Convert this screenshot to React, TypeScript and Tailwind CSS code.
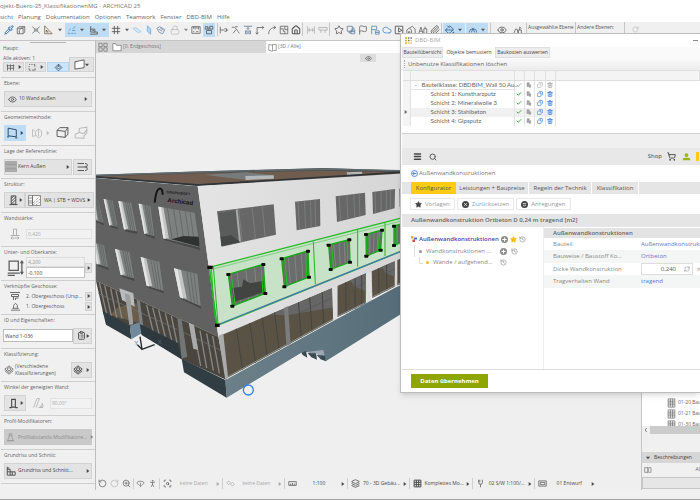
import React from "react";
import {
  Pipette, Lock, Star, Flag, Check, Copy, Trash2, Menu, Search, ShoppingCart,
  RotateCcw, RotateCw, ZoomIn, PersonStanding, History, RefreshCw, Eye, Layers,
  PaintBucket, Paperclip, ScanSearch, ClipboardList, Home, Cloud,
} from "lucide-react";

const ui = "font-['Open_Sans','Noto_Sans',sans-serif]";

type DrawProps = { d: string; className?: string; fill?: string; sw?: number; color?: string };

function Draw({ d, className = "size-[10px]", fill = "none", sw = 1.8, color = "currentColor" }: DrawProps) {
  return (
    <svg viewBox="0 0 24 24" className={`${className} shrink-0`} fill={fill} stroke={color} strokeWidth={sw} aria-hidden="true">
      <path d={d} />
    </svg>
  );
}

function Caret({ down = false, className = "" }: { down?: boolean; className?: string }) {
  return (
    <svg viewBox="0 0 6 6" className={`size-[4px] shrink-0 ${className}`} fill="currentColor" aria-hidden="true">
      <path d={down ? "M0 1h6L3 5z" : "M1 0v6l4-3z"} />
    </svg>
  );
}

/* ---------- Toolbar ---------- */

function Tool({ label, children, on = false }: { label: string; children: React.ReactNode; on?: boolean }) {
  return (
    <button aria-label={label} className={`flex h-[14px] w-3 shrink-0 items-center justify-center ${on ? "bg-[#bfdcf5]" : ""}`}>
      {children}
    </button>
  );
}

function WideTool({ label, children }: { label: string; children: React.ReactNode }) {
  return (
    <button aria-label={label} className="flex h-[14px] w-[22px] shrink-0 items-center justify-between bg-[#bfdcf5] pr-[3px] pl-[2px]">
      {children}
      <Caret down />
    </button>
  );
}

const Sep = () => <span className="h-[13px] w-px shrink-0 bg-[#c6c6c6]" />;

const ic = "size-[10px] shrink-0";

function Toolbar() {
  return (
    <div className="flex h-[18px] shrink-0 items-start overflow-hidden bg-[#f0f0f0] text-[#5a5a5a]">
      <div className="flex h-[15px] shrink-0 items-center pl-[3px]">
        <Tool label="Pipette"><Pipette className={`${ic} text-[#2f6fae]`} strokeWidth={2.4} /></Tool>
        <Tool label="Auswahl"><Draw d="M3 8l4-4h14v13l-4 4H3zM3 8h14v13M17 8l4-4M8 21V12l9-8" /></Tool>
        <span className="w-[3px]" />
        <Tool label="Fang"><Draw d="M3 4l7 6M21 4l-7 6M3 20l7-6M21 20l-7-6M9 10h6v4H9z" sw={1.6} /></Tool>
        <Tool label="Winkel"><Draw d="M4 2v19h18zM8 12v5h5z" color="#6d5c43" /></Tool>
        <span className="flex w-[11px] justify-center"><Caret down /></span>
        <WideTool label="Hilfslinien"><Draw d="M2 20h6M10 20h6M18 20h4M4 14l5-5M12 13h8M14 9l6-6" color="#4f86b8" /></WideTool>
        <WideTool label="Koordinaten"><Draw d="M4 3v14h16v5H2M4 10h10v7M8 13h4" sw={2.2} /></WideTool>
        <span className="w-px" />
        <Tool label="Raster"><Draw d="M8 2v20M16 2v20M2 8h20M2 16h20" sw={2.2} /></Tool>
        <span className="flex w-[9px] justify-center"><Caret down /></span>
        <Tool label="Ebene XY"><Draw d="M2 8l7-2 13 10-7 3z" color="#9cc8ea" fill="#d3e7f7" /></Tool>
        <Tool label="Ebene YZ"><Draw d="M8 2l8 7v13l-8-7z" color="#6fa6d6" fill="#b8d7f2" /></Tool>
        <Tool label="Ebene drehen"><Draw d="M2 8l7-4 12 7-5 10-8-3zM6 10l9 5M10 7l8 5" color="#667f97" /></Tool>
        <span className="w-[2px]" />
        <Tool label="Sperren"><Lock className={`${ic} text-[#b4b4b4]`} strokeWidth={1.6} /></Tool>
        <span className="flex w-[9px] justify-center"><Caret down className="text-[#8a8a8a]" /></span>
        <Tool label="Maßstab"><Draw d="M2 4h20v16H2zM6 4v5M10 4v7M14 4v5M18 4v7M5 16h3M12 16h6" /></Tool>
        <span className="w-px" />
        <Tool label="Gruppierung" on><Draw d="M3 4h6v6H3zM14 3h7v7h-7zM6 13h12v8H6zM9 7h5M10 10l4 3" sw={2} /></Tool>
        <span className="w-[2px]" />
        <Sep />
        <Tool label="Verbinden"><Draw d="M3 4v16M3 12h10M13 9h5v6h-5M18 12h4" /></Tool>
        <Tool label="Trimmen"><Draw d="M2 6c8-3 10 3 18 14M12 11L5 20M10 4h6" /></Tool>
        <Tool label="Anpassen"><Draw d="M2 3h20M12 6v6M9 9l3-3 3 3M6 14h4v7H6zM14 14h4v7h-4z" color="#55708c" /></Tool>
        <Tool label="Ecke"><Draw d="M5 22V6h16M17 2l4 4-4 4M2 18l3 4 3-4" /></Tool>
        <Tool label="Abrunden"><Draw d="M4 22C4 12 10 6 20 6M16 2l5 4-5 4" /></Tool>
        <Tool label="Teilen"><Draw d="M3 3h18v18H3zM3 9h7v6M14 3v8h7M10 15h4v6" /></Tool>
        <Tool label="Haus"><Home className={ic} strokeWidth={2.6} /></Tool>
        <Sep />
        <span className="w-[2px]" />
        <Tool label="Abstand"><Draw d="M4 3v18M20 3v18M4 12h16M8 8v8M16 8v8" color="#aaa" /></Tool>
        <Tool label="Verteilen"><Draw d="M2 6h20v6H2zM7 12v7M17 12v7" color="#aaa" /></Tool>
        <Sep />
        <span className="w-[3px]" />
        <Tool label="Favoriten"><Star className={ic} strokeWidth={2} /></Tool>
        <Tool label="Ebenen"><Draw d="M3 3h12v12H3zM7 15v4h5M15 7h4v4M12 12h9v9h-9zM12 16h9" color="#56779a" /></Tool>
        <Tool label="Fahne"><Flag className={ic} strokeWidth={1.8} /></Tool>
        <Tool label="Fahne mit Liste"><Draw d="M4 22V3h12v8H4M13 14h9v8h-9zM13 18h9" color="#4b7fb5" /></Tool>
        <Tool label="Wolke"><Cloud className={`${ic} text-[#4a90d9]`} strokeWidth={2} /></Tool>
        <Tool label="Rahmen"><Draw d="M3 3h18v18H3zM11 7v10l8-4z" sw={2.2} /></Tool>
        <Tool label="Gebäude"><Draw d="M2 21v-9l6-5 5 5v9M9 7l6-4 7 7v11M6 21v-5h3v5" /></Tool>
        <Tool label="Schrift"><Draw d="M2 20l5-15 5 15M4 15h6M14 9h7v11h-7zM17 4v5" /></Tool>
        <Tool label="Anhang"><Paperclip className={ic} strokeWidth={2} /></Tool>
        <Sep />
        <span className="w-px" />
        <WideTool label="3D-Stil"><PaintBucket className={`${ic} text-[#365f8a]`} strokeWidth={2} /></WideTool>
        <span className="w-px" />
        <WideTool label="Sonnenstand"><Draw d="M3 18a9 9 0 1118 0M8 18l4-10 4 10" color="#365f8a" /></WideTool>
        <span className="w-[2px]" />
        <Sep />
        <span className="w-[5px]" />
        <Tool label="Sichtbarkeit"><Eye className={ic} strokeWidth={2} /></Tool>
        <span className="w-1" />
        <Tool label="Sperre"><Draw d="M2 20l4-10h4l2 10M13 20v-8h7v8M16 12V5l4 3" /></Tool>
        <span className="w-[2px]" />
        <Sep />
        <div className="flex h-[11px] items-center self-start text-[5px] whitespace-nowrap text-[#555]">
          <span className="w-12 pl-px">Ausgewählte Ebene</span>
          <Sep />
          <span className="w-12 pl-px">Andere Ebenen:</span>
          <Sep />
        </div>
        <span className="w-1" />
        <Tool label="Zurück"><RotateCw className="size-[7px] text-[#b6b6b6]" /></Tool>
      </div>
    </div>
  );
}

/* ---------- Info palette ---------- */

function Section({ title, children }: { title: string; children: React.ReactNode }) {
  return (
    <section className="flex min-h-0 flex-1 flex-col border-t border-[#cfcfcf] px-[3px]">
      <h2 className="h-[13px] shrink-0 text-[5px] leading-[10px] whitespace-nowrap text-[#666]">{title}</h2>
      {children}
    </section>
  );
}

const btn = "flex items-center border border-[#d2d2d2] bg-[#e3e3e3] text-[#484848]";

function Palette() {
  return (
    <aside className="flex w-24 shrink-0 flex-col overflow-hidden border-r border-[#bdbdbd] bg-[#f0f0f0] pl-px text-[5px] text-[#5c5c5c]">
      <div className="flex h-[36px] shrink-0 flex-col px-[2px]">
        <span className="mt-px h-px w-9 self-center bg-[#b5b5b5]" />
        <h2 className="leading-[11px]">Haupt:</h2>
        <div className="flex items-end">
          <div className="w-[66px]">
            <p className="leading-[8px] whitespace-nowrap">Alle aktiven: 1</p>
            <div className="flex gap-px">
              <button aria-label="Wand" className={`${btn} h-[10px] w-[21px] justify-around`}><Draw d="M2 7h20M4 4v16M12 4v16M20 4v16M4 14h16" className="size-[9px]" /><Caret /></button>
              <button aria-label="Auswahlart" className={`${btn} h-[10px] w-[21px] justify-around`}><Draw d="M3 4h3M9 4h3M15 4h3M3 8v3M3 14v5h4M10 19h9v-5M18 4v6" className="size-[9px]" /><Caret /></button>
              <button aria-label="Magnet" className="flex h-[10px] w-[22px] items-center justify-center border border-[#b5d5ef] bg-[#cce4f7]"><Draw d="M12 3l9 9-9 9-9-9zM12 8l4 4-4 4-4-4zM12 3v5" className="size-[9px]" sw={2.4} color="#44617c" /></button>
            </div>
          </div>
          <button aria-label="Wandtyp" className={`${btn} h-[15px] flex-1 justify-between px-1`}><Draw d="M2 6l20-4v17L2 22z" fill="#fff" className="size-[11px]" /><Caret down /></button>
        </div>
      </div>

      <Section title="Ebene:">
        <button className={`${btn} h-[16px] gap-[2px] px-[3px]`}>
          <Eye className="size-[9px]" /><span className="flex-1 text-left">10 Wand außen</span><Caret />
        </button>
      </Section>

      <Section title="Geometriemethode:">
        <div className="flex h-[16px] items-center justify-between pr-1">
          <button aria-label="Gerade Wand" className="flex h-[16px] w-[22px] items-center justify-between bg-[#bfdcf5] px-[2px] text-[#2a4a6a]"><Draw d="M4 4l15 3v13L4 18zM2 20h4M17 22h4" className="size-[13px]" /><Caret /></button>
          <button aria-label="Bogenwand" className="flex items-center gap-[3px] text-[#bbb]"><Draw d="M3 5l6 4 6-5 6 4v10l-6 4-4-5-8 2zM9 9v9M15 4v14" className="size-[12px]" /><Caret /></button>
          <button aria-label="Rechteckwand"><Draw d="M2 8l5-5h15v12l-5 6L2 19zM2 8l15 2 5-7M17 10v11" className="size-[13px]" /></button>
          <button aria-label="Gedrehte Wand" className="text-[#bbb]"><Draw d="M2 14l7-3V4l13-2v10l-5 5v4L2 20zM9 11l8 2 5-7" className="size-[14px]" /></button>
        </div>
      </Section>

      <Section title="Lage der Referenzlinie:">
        <div className="flex gap-px">
          <button className={`${btn} h-[16px] w-[68px] gap-px pr-px`}>
            <svg viewBox="0 0 12 10" className="h-[11px] w-[12px]"><path d="M0 .5h12M0 9.5h12M0 2.5h12M0 7.5h12" stroke="#555" strokeWidth=".8" /><path d="M0 3l2 4 2-4 2 4 2-4 2 4 2-4M0 7l2-4 2 4 2-4 2 4 2-4 2 4" stroke="#777" strokeWidth=".5" fill="none" /></svg>
            <span className="flex-1 text-left whitespace-nowrap">Kern Außen</span><Caret />
          </button>
          <button aria-label="Referenzlinie spiegeln" className={`${btn} h-[16px] flex-1 justify-center`}><Draw d="M1 5h13M1 12h20M1 19h13M16 5c6 0 6 6 1 6M16 19c6 0 6-6 1-6" className="size-[12px]" /></button>
        </div>
      </Section>

      <Section title="Struktur:">
        <div className="flex">
          <button aria-label="Struktur" className={`${btn} h-[16px] w-[22px] justify-between pr-px pl-[3px]`}><Draw d="M7 2h10v18H7zM3 21h18M7 8l6-6M7 14L17 4M7 20L17 10" className="size-[11px]" sw={2} /><Caret /></button>
          <button className={`${btn} h-[16px] flex-1 gap-[2px] px-[2px] whitespace-nowrap`}>
            <svg viewBox="0 0 14 11" className="h-[11px] w-[14px] shrink-0" fill="#f8f8f8" stroke="#666" strokeWidth=".7"><path d="M.5.5h4v10h-4zM4.500.5h8v10h-8zM.5 3h4M.5 6h4M.5 8h4" /><path d="M5 8l7-7M5 10l7-6M8 10l4-3" strokeDasharray="1 1" /></svg>
            <span className="flex-1 text-left">WA | STB + WDVS</span><Caret />
          </button>
        </div>
      </Section>

      <Section title="Wandstärke:">
        <label className="flex h-[16px] items-center text-[#aaa]">
          <span className="flex w-[22px] justify-center"><Draw d="M9 2h6v13H9zM3 15h18M4 20h16M7 17l-3 3 3 3M17 17l3 3-3 3" className="size-[12px]" /></span>
          <input aria-label="Wandstärke" defaultValue="0,420" className="h-[10px] min-w-0 flex-1 border border-[#e0e0e0] bg-[#f2f2f2] px-px text-[#aaa]" />
        </label>
      </Section>

      <Section title="Unter- und Oberkante:">
        <div className="-mt-[3px] flex items-center">
          <span className="flex w-[22px] justify-center"><Draw d="M3 3h13v13H3zM1 20h17M1 23h10M21 3v18M19 6l2-3 2 3M19 18l2 3 2-3" className="size-[17px]" /></span>
          <div className="w-[59px]">
            <input aria-label="Oberkante" defaultValue="4,200" className="block h-[10px] w-full border border-[#dcdcdc] bg-[#f0f0f0] px-px text-[#999]" />
            <input aria-label="Unterkante" defaultValue="-0,100" className="block h-[11px] w-full border border-[#c4c4c4] bg-white px-px text-[#444]" />
          </div>
          <button aria-label="Kanten" className={`${btn} ml-auto h-[10px] w-[7px] justify-center`}><Caret /></button>
        </div>
      </Section>

      <Section title="Verknüpfte Geschosse:">
        <div className="-mt-[3px] flex flex-col whitespace-nowrap">
          <div className="flex h-[11px] items-center">
            <span className="flex w-[22px] justify-center"><Draw d="M2 5h20M5 9h14v4H5zM9 13v7M13 20v-4h6" className="size-[12px]" /></span>
            <span className="leading-[9px]">2. Obergeschoss (Ursp...</span>
            <button aria-label="Oberes Geschoss" className={`${btn} ml-auto h-[9px] w-[7px] justify-center`}><Caret /></button>
          </div>
          <div className="flex h-[10px] items-center">
            <span className="flex w-[22px] justify-center"><Draw d="M2 20h20M5 16h14M8 16V9l4-4 4 4v7" className="size-[11px]" /></span>
            <span className="leading-[9px]">1. Obergeschoss</span>
            <button aria-label="Unteres Geschoss" className={`${btn} ml-auto h-[9px] w-[7px] justify-center`}><Caret /></button>
          </div>
        </div>
      </Section>

      <Section title="ID und Eigenschaften:">
        <div className="flex items-center justify-between">
          <input aria-label="ID" defaultValue="Wand 1-036" className="-ml-px h-[13px] w-[70px] border border-[#bcbcbc] bg-white px-px text-[#444]" />
          <button aria-label="Eigenschaften" className={`${btn} h-[16px] w-[21px] justify-between pr-px pl-[3px]`}><ClipboardList className="size-[9px]" strokeWidth={2.4} /><Caret /></button>
        </div>
      </Section>

      <Section title="Klassifizierung:">
        <div className="flex items-center">
          <Draw d="M12 2l10 8-10 8-10-8zM2 14l10 8 10-8M12 6l5 4-5 4-5-4z" className="size-[10px]" />
          <p className="ml-px flex-1 leading-[7px]">(Verschiedene<br />Klassifizierungen)</p>
          <button aria-label="Klassifizierung wählen" className={`${btn} h-[16px] w-[21px] justify-between pr-px pl-px`}><Draw d="M12 2l10 8-10 8-10-8zM2 14l10 8 10-8M12 6l5 4-5 4-5-4z" className="size-[10px]" sw={2.2} /><Caret /></button>
        </div>
      </Section>

      <Section title="Winkel der geneigten Wand:">
        <div className="flex items-center gap-[6px]">
          <button aria-label="Wandneigung" className={`${btn} h-[16px] w-[22px] justify-between pr-px pl-[3px]`}><Draw d="M8 3h8v17H8zM3 21h5M16 21h5" className="size-[11px]" sw={2.4} /><Caret /></button>
          <Draw d="M3 21L10 3h5L8 21M13 21h9M16 17a3 3 0 103-3M21 12l-2 8" className="size-[12px]" color="#b5b5b5" />
          <input aria-label="Neigungswinkel" defaultValue="90,00°" className="h-[11px] w-0 flex-1 border border-[#e2e2e2] bg-[#f2f2f2] px-px text-[#aaa]" />
        </div>
      </Section>

      <Section title="Profil-Modifikatoren:">
        <button className="flex h-[16px] items-center gap-[3px] bg-[#c9c9c9] px-[2px] whitespace-nowrap text-[#8f8f8f]">
          <Draw d="M9 2h6l1 10 4 8H4l4-8zM2 21h20M9 7h6" className="size-[9px]" />
          <span className="flex-1 text-left">Profilabstands-Modifikatore...</span><Caret />
        </button>
      </Section>

      <Section title="Grundriss und Schnitt:">
        <button className={`${btn} h-[16px] gap-[2px] px-px`}>
          <Draw d="M3 2v20h19M3 8h7v14M10 14h12v8M3 5h5M3 14h7M15 14v8" className="size-[10px]" sw={2.2} />
          <span className="flex-1 text-left whitespace-nowrap">Grundriss und Schnitt...</span><Caret />
        </button>
      </Section>
      <div className="h-[7px] shrink-0 border-t border-[#cfcfcf]" />
    </aside>
  );
}

/* ---------- 3D view ---------- */

type Quad = [number, number, number, number, number, number, number, number];
const pts = (q: number[]) => q.join(" ");
const mix = (a: number, b: number, t: number) => a + (b - a) * t;

function Panes({ q, cuts, fill, line, w = 2 }: { q: Quad; cuts: number[]; fill: string; line: string; w?: number }) {
  const [x1, y1, x2, y2, x3, y3, x4, y4] = q;
  return (
    <g>
      <polygon points={pts(q)} fill={fill} />
      {cuts.map((t) => (
        <line key={t} x1={mix(x1, x2, t)} y1={mix(y1, y2, t)} x2={mix(x4, x3, t)} y2={mix(y4, y3, t)} stroke={line} strokeWidth={w} />
      ))}
    </g>
  );
}

const leftWindows: Quad[] = [
  [8, 112, 24, 117, 40, 188, 14, 180],
  [41, 117, 68, 122, 82, 200, 58, 196],
  [85, 123, 124, 129, 140, 214, 102, 208],
  [146, 131, 181, 137, 193, 228, 163, 221],
  [205, 140, 314, 158, 329, 262, 220, 235],
  [10, 248, 42, 256, 54, 322, 20, 312],
  [75, 267, 118, 276, 132, 355, 92, 344],
  [152, 291, 208, 305, 220, 392, 170, 377],
  [252, 325, 322, 341, 332, 438, 270, 412],
];

const topWindows: Quad[] = [
  [381, 154, 551, 133, 558, 224, 395, 260],
  [615, 125, 690, 117, 691, 198, 620, 211],
  [737, 109, 825, 98, 827, 165, 741, 186],
  [847, 96, 915, 87, 914, 145, 849, 162],
  [928, 86, 990, 78, 990, 130, 929, 141],
];

const selectedWindows: Quad[] = [
  [415, 343, 520, 313, 526, 400, 427, 438],
  [575, 296, 654, 273, 657, 351, 583, 380],
  [716, 255, 778, 239, 780, 306, 722, 328],
  [828, 223, 876, 210, 872, 270, 829, 288],
  [912, 198, 950, 188, 950, 240, 912, 256],
];

const glazing: { q: Quad; cuts: number[] }[] = [
  { q: [388, 528, 727, 384, 730, 480, 410, 655], cuts: [0.15, 0.27, 0.38, 0.49, 0.7, 0.8, 0.91] },
  { q: [742, 378, 828, 340, 828, 430, 742, 472], cuts: [0.3, 0.62, 0.85] },
  { q: [845, 334, 914, 304, 914, 380, 847, 414], cuts: [0.3, 0.65] },
  { q: [922, 300, 1000, 268, 1000, 350, 922, 376], cuts: [0.5] },
];

function Building() {
  return (
    <svg viewBox="18 -321 1635 1272" className="block h-[424px] w-[545px] shrink-0" role="img" aria-label="3D-Ansicht des Gebäudes">
      <defs>
        <linearGradient id="wall" x1="0" x2="1"><stop offset="0" stopColor="#e4e4e4" /><stop offset="1" stopColor="#d4d4d4" /></linearGradient>
        <linearGradient id="base" gradientUnits="userSpaceOnUse" x1="410" y1="0" x2="930" y2="0"><stop offset="0" stopColor="#6c8089" /><stop offset="1" stopColor="#566d79" /></linearGradient>
      </defs>

      {/* roof */}
      <polygon points="18,44 340,34 700,24 1000,34 1000,44 323,78 18,52" fill="#4d5254" />
      <polygon points="30,49 345,40 690,32 1000,38 325,72" fill="#705d4f" />
      <polygon points="345,44 470,37 550,46 550,56 470,59 400,52" fill="#777b7c" />
      <polygon points="466,48 551,46 552,56 467,60" fill="#b4b8b9" />
      <polygon points="770,37 815,35 818,42 772,45" fill="#b4b8b9" />
      <path d="M18 46L340 36 700 27 930 32" stroke="#60696c" strokeWidth="4" fill="none" />
      <path d="M18 51L323 75 930 37" stroke="#2f3335" strokeWidth="5" fill="none" />

      {/* shaded facade */}
      <polygon points="18,54 323,79 385,530 265,475 18,362" fill="#616161" />
      {leftWindows.map((q) => {
        const [x1, y1, x2, y2, x3, y3, x4, y4] = q;
        const big = x2 - x1 > 90;
        const a = big ? 0.14 : 0.3;
        return (
          <g key={pts(q)}>
            <polygon points={pts([x4, y4, x3, y3, x3 + 2, y3 + 8, x4 + 4, y4 + 6])} fill="#484848" />
            <Panes q={q} cuts={big ? [0.25, 0.42, 0.58, 0.74, 0.87] : [0.55, 0.7, 0.85]} fill="#7d8281" line="#5a5f5e" />
            <polygon points={pts([x1, y1, mix(x1, x2, a), mix(y1, y2, a), mix(x4, x3, a * 1.1), mix(y4, y3, a * 1.1) - 4, x4, y4])} fill="#c3c6c5" />
            <polygon points={pts([x1, y1, mix(x1, x2, a / 2), mix(y1, y2, a / 2), mix(x4, x3, a / 2), mix(y4, y3, a / 2), x4, y4])} fill="#e4e6e5" />
          </g>
        );
      })}
      <polygon points="280,228 326,230 329,260 244,238" fill="#2f3231" />
      <path d="M194 128Q198 88 208 86T218 104" stroke="#151515" strokeWidth="6" fill="none" />
      <g fill="#222" fontFamily="'Liberation Sans', Arial, sans-serif" fontWeight="bold">
        <text x="229" y="100" fontSize="11" transform="rotate(5 229 100)">GRAPHISOFT</text>
        <text x="232" y="126" fontSize="18" fill="#111" transform="rotate(7 232 126)">Archicad</text>
      </g>

      {/* ground floor, left */}
      <polygon points="18,362 265,475 385,530 410,660 275,598 150,520 40,462" fill="#4a463f" />
      <polygon points="85,440 140,430 150,490 60,465" fill="#6a5d49" />
      <polygon points="88,385 130,400 134,440 96,420" fill="#b9bcbc" />
      <g stroke="#858887" strokeWidth="4">
        <path d="M28 368l22 94M44 376l20 92M62 385l18 88M78 392l18 84M170 435l22 90M188 443l22 90M206 450l22 90M226 460l20 85M244 468l18 85M310 500l22 118M330 512l20 112M350 520l20 112M368 528l20 112" fill="none" />
        <path d="M24 400L262 508M270 512L400 575" strokeWidth="2" stroke="#6e7473" />
      </g>
      <polygon points="104,400 120,405 130,493 118,495" fill="#9c9f9e" />
      <polygon points="140,420 150,424 160,500 150,497" fill="#7d8080" />
      <polygon points="262,475 275,480 292,590 275,596" fill="#727575" />
      <polygon points="296,488 312,495 324,570 310,566" fill="#a9acab" />

      {/* lit facade */}
      <polygon points="323,78 1000,37 1000,350 923,378 385,530" fill="url(#wall)" />
      {topWindows.map((q) => (
        <Panes key={pts(q)} q={q} cuts={[0.12, 0.38, 0.62, 0.8]} fill="#666766" line="#858887" />
      ))}
      <polygon points="385,160 440,150 448,248 394,258" fill="#5a5c5b" />
      <path d="M440 148l10 97" stroke="#a8aaa9" strokeWidth="6" />
      <polygon points="392,230 425,226 450,246 395,258" fill="#444746" />

      {/* ground floor, right */}
      {glazing.map(({ q, cuts }) => {
        const [x1, y1, x2, y2, x3, y3, x4, y4] = q;
        return (
          <g key={pts(q)}>
            <polygon points={pts(q)} fill="#5a5345" />
            <polygon points={pts([mix(x1, x2, 0.45), mix(y1, y2, 0.45), x2, y2, x3, mix(y2, y3, 0.6), mix(x1, x2, 0.6), mix(y1, y2, 0.6) + 24])} fill="#656665" />
            <Panes q={q} cuts={cuts} fill="none" line="#454441" w={3} />
            <path d={`M${x1} ${mix(y1, y4, 0.35)}L${x2} ${mix(y2, y3, 0.3)}`} stroke="#555" strokeWidth="2" />
            <path d={`M${x4} ${y4 - 3}L${x3} ${y3 - 3}`} stroke="#8a8d8c" strokeWidth="3" />
          </g>
        );
      })}
      <polygon points="582,444 594,439 602,552 589,557" fill="#7b7c7b" />
      <path d="M826 342v88" stroke="#94681c" strokeWidth="3" />
      <polygon points="385,528 400,521 414,652 406,660" fill="#a9acab" />
      <polygon points="726,384 742,378 742,478 730,484" fill="#dedede" />
      <polygon points="828,341 844,335 845,424 830,430" fill="#dedede" />

      {/* plinth */}
      <polygon points="406,660 730,483 915,383 1000,345 1000,420 707,604 700,570 634,578 410,713" fill="url(#base)" />
      <path d="M634 578l14-5 4 20-14-8zM652 578h24l2 8-14 6zM664 592l14-12 3 19zM680 585h20l2 6-10 7zM690 597l14-12 4 19z" fill="#3a4a52" />
      <polygon points="652,572 700,560 704,585 690,590 678,580 664,583" fill="#64798a" fillOpacity="0.6" />
      <polygon points="38,453 120,497 124,538 48,494" fill="#2f3c42" />
      <polygon points="120,497 148,487 155,520 124,538" fill="#71899a" />
      <polygon points="150,492 265,550 275,598 155,525" fill="#2d393f" />
      <polygon points="275,596 406,660 410,713 282,637" fill="#303d43" />

      {/* selected wall */}
      <polygon points="358,322 1000,157 1000,247 381,497" fill="#c8e2c7" stroke="#27ba27" strokeWidth="4" />
      <path d="M370 320l14 172M364 322l10 150M358 322l23 175M670 244l6 129M803 208v112M885 187v101" stroke="#22b722" strokeWidth="3" fill="none" />
      <path d="M358 330L1000 166" stroke="#58c658" strokeWidth="2" />
      <path d="M381 495L1000 247" stroke="#4678a8" strokeWidth="4" />
      {selectedWindows.map((q) => (
        <g key={pts(q)}>
          <Panes q={q} cuts={[0.25, 0.5, 0.75]} fill="#6a6d6b" line="#8d918f" />
        </g>
      ))}
      <polygon points="426,384 456,380 460,358 480,370 520,362 522,396 432,426" fill="#424442" />
      {selectedWindows.map((q) => (
        <g key={pts(q)}>
          <polygon points={pts(q)} fill="none" stroke="#14a814" strokeWidth="4" />
          <path d={`M${q[0] + 9} ${q[1]}L${q[6] + 9} ${q[7]}M${q[2] - 7} ${q[3] + 4}L${q[4] - 7} ${q[5]}`} stroke="#1fc41f" strokeWidth="3" />
          {[0, 2, 4, 6].map((i) => (
            <rect key={i} x={q[i] - 6} y={q[i + 1] - 4} width="12" height="9" rx="2" fill="#0b0b0b" />
          ))}
        </g>
      ))}
      <rect x="352" y="317" width="16" height="10" fill="#0b0b0b" />
      <rect x="375" y="491" width="14" height="10" fill="#0b0b0b" />

      {/* axes and orbit marker */}
      <path d="M150 530l6 38 38-14M156 568l-14-14" stroke="#1f272b" strokeWidth="4" fill="none" />
      <g fill="#5a6a78" fontFamily="'Liberation Sans', Arial, sans-serif" fontSize="18"><text x="133" y="556">Y</text><text x="203" y="552">X</text></g>
      <circle cx="475" cy="690" r="15" fill="none" stroke="#2f86ee" strokeWidth="4" />
    </svg>
  );
}

function StatusItem({ icon, text, muted = false }: { icon: React.ReactNode; text: string; muted?: boolean }) {
  return (
    <button className={`flex h-[11px] min-w-0 flex-1 items-center border-l border-[#cfcfcf] pr-[2px] pl-[3px] text-[5px] whitespace-nowrap ${muted ? "text-[#a8a8a8]" : "text-[#484848]"}`}>
      {icon}<span className="flex-1 text-center">{text}</span><Caret />
    </button>
  );
}

const sm = "size-[9px] shrink-0";

function Viewport() {
  return (
    <main className="flex min-w-0 flex-1 flex-col overflow-hidden bg-[#efefef]">
      <nav className="flex h-3 shrink-0 bg-white text-[5px] text-[#777]">
        <button className="flex w-[170px] shrink-0 items-center bg-[#d6d6d6] px-[2px]">
          <Draw d="M2 3h8v8H2zM14 3h8v8h-8zM2 14h8v8H2zM14 14h8v8h-8z" className="size-[10px]" />
          <Draw d="M2 4h7l2 4h11v13H2z" fill="#fff" className="mr-px ml-1 size-[10px]" />[0. Erdgeschoss]
        </button>
        <button className="flex items-center gap-px px-[2px]"><Draw d="M2 4l10 2v16L2 19zM12 4h10v16h-8M12 4v3" className="size-[9px]" />[3D / Alle]</button>
      </nav>
      <div className="relative flex min-h-0 flex-1 overflow-hidden">
        <Building />
        <button aria-label="Ansicht einblenden" className="absolute top-px left-[264px] flex h-2 w-4 items-center justify-center bg-[#dcdcdc] text-[#555]"><Eye className="size-[7px]" /></button>
      </div>
      <footer className="flex h-[13px] shrink-0 items-center text-[#666]">
        <div className="flex w-[37px] shrink-0 items-center justify-around"><RotateCcw className={sm} /><RotateCw className={`${sm} text-[#bbb]`} /><ZoomIn className={sm} /></div>
        <div className="flex h-[11px] w-[26px] shrink-0 items-center justify-around border-l border-[#cfcfcf]"><Draw d="M8 15c-8-2-7-9 4-9s12 7 4 9M12 10v10M9 17l3 3 3-3" className={sm} /><PersonStanding className={sm} /></div>
        <div className="flex w-[438px] shrink-0">
          <StatusItem muted icon={<ScanSearch className={`${sm} text-[#555]`} />} text="keine Daten" />
          <StatusItem muted icon={<Draw d="M2 10l5-5 5 5-5 5zM12 14l5-5 5 5-5 5z" className={sm} />} text="keine Daten" />
          <StatusItem icon={<Draw d="M2 7h20v10H2zM7 12v5M12 10v7M17 12v5" className={sm} />} text="1:100" />
          <StatusItem icon={<Layers className={sm} />} text="70 - 3D Gebäu..." />
          <StatusItem icon={<Draw d="M3 3h18v18H3zM3 9h18M3 15h18M9 3v18M15 3v18" className={sm} sw={2.6} />} text="Komplettes Mo..." />
          <StatusItem icon={<Draw d="M7 2v8q0 4 5 4t5-4V2M12 14v8M10 2v7" className={sm} />} text="02 S/W 1:100/..." />
          <StatusItem icon={<Draw d="M2 5h20v14H2zM6 9h12v6H6z" className={sm} />} text="01 Entwurf" />
        </div>
      </footer>
    </main>
  );
}

function Navigator() {
  return (
    <aside className="flex w-[59px] shrink-0 flex-col justify-end overflow-hidden border-l border-[#c4c4c4] bg-[#f0f0f0] text-[5px] text-[#666]">
      <ul className="flex-1 overflow-hidden bg-white pt-[356px] pl-[25px]">
        {["01-20 Bau", "01-21 Bau", "01-30 Bau"].map((t) => (
          <li key={t} className="flex h-[11px] items-center gap-[2px] whitespace-nowrap">
            <Draw d="M3 1h18v22H3zM3 7h18M3 12h18M3 17h18M9 1v22M15 1v22" className="h-[10px] w-[9px]" />{t}
          </li>
        ))}
      </ul>
      <div className="flex h-2 shrink-0 items-center"><Draw d="M15 4l-7 8 7 8" sw={3} className="mx-px size-[6px]" /><span className="h-2 flex-1 bg-[#cbcbcb]" /></div>
      <button className="mt-[18px] flex h-[11px] shrink-0 items-center gap-1 bg-[#d6d6d6] pl-1 text-[#444]"><Caret down />Beschreibungen</button>
      <div className="flex h-[14px] shrink-0 items-center pl-[2px]"><Draw d="M2 5h10v14H2zM12 3v18M15 5h6v14h-6" className="size-[8px]" /><span className="ml-auto whitespace-nowrap">Al</span></div>
      <div className="mb-px h-3 shrink-0 border border-r-0 border-[#c6c6c6] bg-[#e6e6e6]" />
    </aside>
  );
}

/* ---------- DBD-BIM window ---------- */

const layers = ["Schicht 1: Kunstharzputz", "Schicht 2: Mineralwolle 3", "Schicht 3: Stahlbeton", "Schicht 4: Gipsputz"];

function RowIcons({ muted = false, on = false }: { muted?: boolean; on?: boolean }) {
  const c = `border-l border-[#e3e3e3] p-0 ${on ? "bg-[#f1f1f1]" : ""}`;
  const i = "mx-auto block size-[6px]";
  return (
    <>
      <td className={c}><Check className={`${i} ${muted ? "text-[#aaa]" : "text-[#38ad3c]"}`} strokeWidth={4} /></td>
      <td className={c}><Draw d="M4 3h9v6h-3v9H4zM12 11h7v10h-7z" fill="#aaa" className={`${i} text-[#888]`} /></td>
      <td className={c}><Copy className={`${i} -scale-x-100 ${muted ? "text-[#bbb]" : "text-[#4285d8]"}`} strokeWidth={2.6} /></td>
      <td className={`${c} border-r`}><Trash2 className={`${i} ${muted ? "text-[#aaa]" : "text-[#3f82e0]"}`} strokeWidth={3} /></td>
    </>
  );
}

const Plus = () => (
  <svg viewBox="0 0 12 12" className="size-[7px] shrink-0" aria-hidden="true"><circle cx="6" cy="6" r="6" fill="#8b8b8b" /><path d="M6 2.500v7M2.500 6h7" stroke="#fff" strokeWidth="1.800" /></svg>
);

function Dialog() {
  const tab = "border-r border-white text-center";
  const chip = "flex h-3 items-center gap-[3px] border border-[#e8e8e8] bg-white px-1 text-[#999]";
  return (
    <section aria-label="DBD-BIM" className="absolute top-[33px] right-0 left-[400px] flex h-[360px] flex-col overflow-hidden border border-r-0 border-[#bdbdbd] bg-white pl-px text-[6px] whitespace-nowrap text-[#666] shadow-md">
      <header className="flex h-[13px] shrink-0 items-center px-[3px] text-[#aaa]">
        <svg viewBox="0 0 7 7" className="mr-[3px] size-[7px]" aria-hidden="true">
          <path d="M0 1h2M0 3.500h2M0 6h2" stroke="#d9b02c" strokeWidth="1.500" /><path d="M3 1h1.500M3 3.500h1.500M5.500 1H7" stroke="#777" strokeWidth="1.500" /><path d="M3 6h1.500M5.500 3.500H7M5.500 6H7" stroke="#e3c35d" strokeWidth="1.500" />
        </svg>
        <h1>DBD-BIM</h1><button aria-label="Minimieren" className="-mr-px ml-auto h-px w-[5px] bg-[#888]" />
      </header>
      <nav className="flex h-[11px] shrink-0 bg-[#fafafa] text-[5px] text-[#444]">
        <button className="w-[41px] border border-[#e0e0e0] bg-[#ededed]">Bauteilübersicht</button>
        <button className="w-[52px] bg-white">Objekte bemustern</button>
        <button className="w-[55px] border border-[#e0e0e0] bg-[#ededed]">Baukosten auswerten</button>
      </nav>
      <div className="flex h-[12px] shrink-0 items-center bg-linear-to-b from-[#fafafa] to-[#ececec] pl-[2px]">
        <span className="mr-[3px] h-2 border-l border-dotted border-[#aaa]" /><button>Unbenutze Klassifikationen löschen</button>
      </div>
      <div className="flex h-[64px] shrink-0 flex-col border-b border-[#cfcfcf] pl-px">
        <table className="w-full table-fixed border-collapse font-['Lato','Open_Sans',sans-serif]">
          <colgroup><col className="w-[7px]" /><col className="w-[104px]" /><col className="w-[10px]" /><col className="w-[10px]" /><col className="w-[11px]" /><col className="w-[10px]" /><col /></colgroup>
          <thead><tr className="h-[10px] border-y border-[#dedede] bg-[#f4f4f4]">{[0, 1, 2, 3, 4, 5, 6].map((n) => <th key={n} className="border-r border-[#e0e0e0] p-0" />)}</tr></thead>
          <tbody className="leading-[8px]">
            <tr className="h-[9px]">
              <td className="border-r border-[#e3e3e3] bg-[#f4f4f4] p-0" />
              <td className="border-b border-[#e3e3e3] p-0"><span className="ml-1 inline-block w-[7px]">-</span>Bauteilklasse: DBDBIM_Wall 50 Au...</td>
              <RowIcons muted />
            </tr>
            {layers.map((t, n) => (
              <tr key={t} className="h-[9px]">
                <td className="border-r border-[#e3e3e3] bg-[#f4f4f4] p-0 text-center">{n === 2 && <Caret className="mx-auto size-[3px]" />}</td>
                <td className={`p-0 pl-[20px] ${n === 2 ? "bg-[#f1f1f1]" : ""}`}>{t}</td>
                <RowIcons on={n === 2} />
              </tr>
            ))}
          </tbody>
        </table>
      </div>
      <div className="h-[14px] shrink-0 bg-[#f0f0f0]" />
      <div className="flex h-[17px] shrink-0 items-center bg-[#e8e8e8] pr-px pl-[11px] text-[#444]">
        <button aria-label="Menü"><Menu className="size-[9px]" strokeWidth={4} /></button>
        <button aria-label="Suche" className="ml-[7px]"><Search className="size-[8px]" strokeWidth={2.6} /></button>
        <span className="mr-[5px] ml-auto">Shop</span>
        <button aria-label="Warenkorb"><ShoppingCart className="size-[9px]" strokeWidth={2.4} /></button>
        <button aria-label="Konto" className="mr-[5px] ml-[6px] text-[#9bb51a]"><Draw d="M12 3a5 5 0 110 10 5 5 0 010-10zM2 22v-3q0-4 5-4h10q5 0 5 4v3z" fill="currentColor" sw={0} className="size-[9px]" /></button>
        <span className="h-[9px] w-[3px] bg-[#fdcb14]" />
      </div>
      <div className="flex h-[17px] shrink-0 items-center gap-px pl-[9px] text-[#777]">
        <svg viewBox="0 0 12 12" className="size-[7px]" fill="none" stroke="#3d72cf" strokeWidth="1.400" aria-hidden="true"><circle cx="6" cy="6" r="5.200" /><path d="M9.500 6H3M6 3L3 6l3 3" /></svg>
        <a href="#aussenwand">Außenwandkonstruktionen</a>
      </div>
      <nav className="flex h-3 shrink-0 bg-[#e5e5e5] pl-[9px] font-medium text-[#555]">
        <button className="w-[45px] bg-[#fdcb14]">Konfigurator</button>
        <button className={`${tab} w-[73px]`}>Leistungen + Baupreise</button>
        <button className={`${tab} w-[63px]`}>Regeln der Technik</button>
        <button className={`${tab} w-[47px]`}>Klassifikation</button>
      </nav>
      <div className="flex h-5 shrink-0 items-center gap-[2px] pl-[8px]">
        <button className={chip}><Star className="size-[7px] text-[#444]" fill="currentColor" />Vorlagen</button>
        <button className={chip}><svg viewBox="0 0 12 12" className="size-[7px]" aria-hidden="true"><circle cx="6" cy="6" r="6" fill="#444" /><path d="M4 4l4 4M8 4l-4 4" stroke="#fff" strokeWidth="1.700" /></svg>Zurücksetzen</button>
        <button className={chip}><svg viewBox="0 0 12 12" className="size-[7px]" aria-hidden="true"><circle cx="6" cy="6" r="6" fill="#444" /><path d="M3 4.500h6M3.500 7q2.500 3 5 0" stroke="#fff" strokeWidth="1.300" fill="none" /></svg>Anregungen</button>
      </div>
      <h2 className="h-[13px] shrink-0 bg-[#e5e5e5] pl-[9px] leading-[13px] font-semibold">Außenwandkonstruktion Ortbeton D 0,24 m tragend [m2]</h2>
      <div className="flex min-h-0 flex-1">
        <ul className="w-[142px] shrink-0 border-r border-[#eee] pt-[6px] pl-[9px] text-[#888]">
          <li className="flex h-[12px] items-center gap-[2px]">
            <svg viewBox="0 0 12 12" className="size-[6px]" aria-hidden="true"><path d="M0 0h5v5H0z" fill="#e8b21a" /><path d="M6 3h6v4H6z" fill="#4a6fd0" /><path d="M3 7h5v5H3z" fill="#d24b3c" /></svg>
            <a href="#aussenwand" className="font-semibold text-[#4a3fa8]">Außenwandkonstruktionen</a>
            <Plus /><Star className="size-[7px] text-[#fdbb14]" fill="currentColor" /><History className="size-[7px]" />
          </li>
          <li className="ml-[3px] flex h-[12px] items-center gap-[4px]">
            <span className="h-full w-1 border-l border-[#ddd]" /><span className="size-[3px] -ml-[3px] rounded-full bg-[#999]" />
            <span className="w-[70px]">Wandkonstruktionen ...</span><Plus /><History className="size-[7px]" />
          </li>
          <li className="ml-[8px] flex h-[11px] items-center gap-[4px]">
            <span className="-mt-1 h-[7px] w-1 border-b border-l border-[#ddd]" /><span className="size-[3px] -ml-px rounded-full bg-[#fdbb14]" />
            <span className="w-[63px]">Wände / aufgehend...</span><History className="size-[7px]" />
          </li>
        </ul>
        <div className="min-w-0 flex-1 overflow-hidden">
          <h3 className="mt-px h-[10px] bg-[#e3e3e3] pl-[9px] leading-[10px] font-semibold">Außenwandkonstruktionen</h3>
          <dl className="text-[#888]">
            <div className="flex h-[12px] items-center pl-[9px]"><dt className="w-[88px] shrink-0">Bauteil</dt><dd className="text-[#6377c4]">Außenwandkonstruktionen</dd></div>
            <div className="flex h-[13px] items-center bg-[#f4f6f6] pl-[9px]"><dt className="w-[88px] shrink-0">Bauweise / Baustoff Ko...</dt><dd className="text-[#6377c4]">Ortbeton</dd></div>
            <div className="flex h-[12px] items-center pl-[9px]">
              <dt className="w-[88px] shrink-0"><label htmlFor="dicke">Dicke Wandkonstruktion</label></dt>
              <dd className="flex items-center"><span className="flex h-3 w-[52px] items-center border border-[#ddd] pr-[2px]"><input id="dicke" defaultValue="0,240" className="w-0 flex-1 text-right text-[#555]" /><RefreshCw className="ml-2 size-[6px]" /></span><span className="ml-1">m</span></dd>
            </div>
            <div className="flex h-[13px] items-center bg-[#f4f6f6] pl-[9px]"><dt className="w-[88px] shrink-0">Tragverhalten Wand</dt><dd className="text-[#6377c4]">tragend</dd></div>
          </dl>
        </div>
      </div>
      <footer className="flex h-[23px] shrink-0 items-start border-t border-[#ddd] pt-1 pl-[9px]">
        <button className="h-[14px] w-[77px] bg-[#8fa600] font-bold text-white">Daten übernehmen</button>
      </footer>
    </section>
  );
}

export default function App() {
  return (
    <div className={`relative flex h-screen w-full flex-col overflow-hidden bg-[#f0f0f0] ${ui}`}>
      <header className="h-[11px] shrink-0 bg-white text-[6px] leading-[12px] whitespace-nowrap text-[#777]">ojekt-Buero-25_KlassifikationenMG - ARCHICAD 25</header>
      <nav className="flex h-[11px] shrink-0 gap-[5px] bg-white text-[6px] leading-[12px] text-[#666]">
        {["sicht", "Planung", "Dokumentation", "Optionen", "Teamwork", "Fenster", "DBD-BIM", "Hilfe"].map((m) => (
          <button key={m}>{m}</button>
        ))}
      </nav>
      <Toolbar />
      <div className="flex min-h-0 flex-1 border-t border-[#c6c6c6]">
        <Palette />
        <Viewport />
        <Navigator />
      </div>
      <div className="h-[10px] shrink-0 border-b border-[#a0a0a0] bg-[#f0f0f0]" />
      <Dialog />
    </div>
  );
}
